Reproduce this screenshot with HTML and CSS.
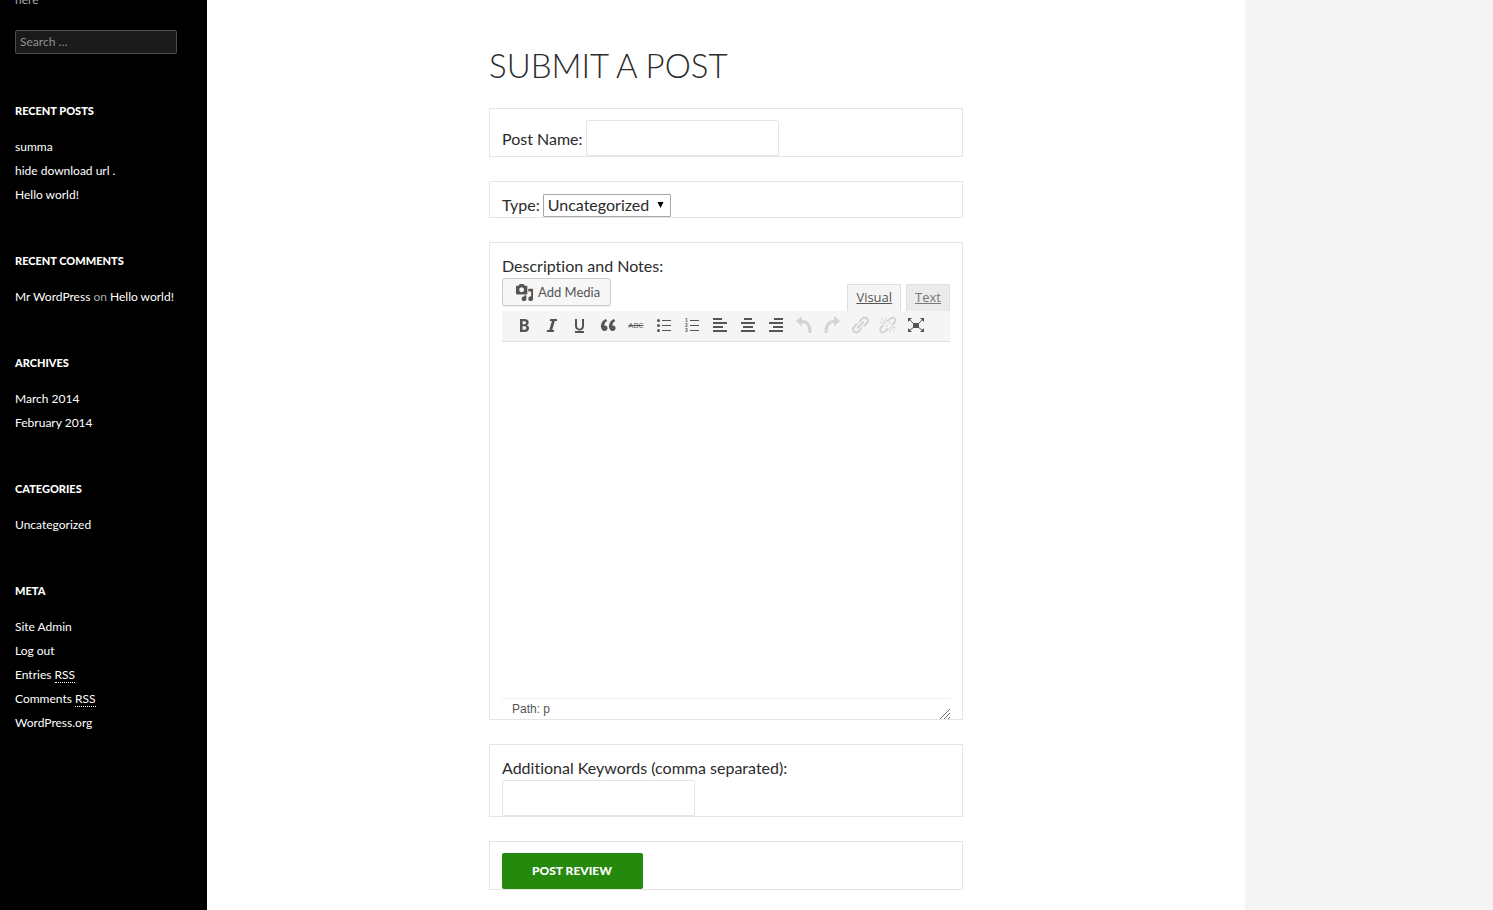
FILE: index.html
```html
<!DOCTYPE html>
<html lang="en">
<head>
<meta charset="utf-8">
<title>Submit a Post</title>
<link rel="stylesheet" href="styles.css">
</head>
<body>
<div class="site">
  <aside class="sidebar">
    <p class="tagline">here</p>
    <input class="search" type="search" placeholder="Search …" aria-label="Search">
    <section class="widget">
      <h2>Recent Posts</h2>
      <ul>
        <li><a href="#">summa</a></li>
        <li><a href="#">hide download url .</a></li>
        <li><a href="#">Hello world!</a></li>
      </ul>
    </section>
    <section class="widget">
      <h2>Recent Comments</h2>
      <ul>
        <li><a href="#">Mr WordPress</a> on <a href="#">Hello world!</a></li>
      </ul>
    </section>
    <section class="widget">
      <h2>Archives</h2>
      <ul>
        <li><a href="#">March 2014</a></li>
        <li><a href="#">February 2014</a></li>
      </ul>
    </section>
    <section class="widget">
      <h2>Categories</h2>
      <ul>
        <li><a href="#">Uncategorized</a></li>
      </ul>
    </section>
    <section class="widget">
      <h2>Meta</h2>
      <ul>
        <li><a href="#">Site Admin</a></li>
        <li><a href="#">Log out</a></li>
        <li><a href="#">Entries <abbr>RSS</abbr></a></li>
        <li><a href="#">Comments <abbr>RSS</abbr></a></li>
        <li><a href="#">WordPress.org</a></li>
      </ul>
    </section>
  </aside>

  <main class="content">
    <form class="post-form">
      <h1>Submit a Post</h1>

      <div class="field field-inline">
        <label for="post-name">Post Name:</label>
        <input class="text-input" id="post-name" type="text">
      </div>

      <div class="field field-inline">
        <label for="post-type">Type:</label>
        <span class="select-wrap">
          <select id="post-type"><option>Uncategorized</option></select>
          <svg class="select-arrow" viewBox="0 0 8 6" aria-hidden="true"><path d="M0.500 0h6L3.500 6z"/></svg>
        </span>
      </div>

      <div class="field">
        <label for="description">Description and Notes:</label>
        <div class="editor">
          <div class="editor-tools">
            <button class="media-button" type="button">
              <svg viewBox="0 0 20 20" aria-hidden="true"><path d="M13 11V4c0-.55-.45-1-1-1h-1.670L9 1H5L3.670 3H2c-.55 0-1 .45-1 1v7c0 .55.45 1 1 1h10c.55 0 1-.45 1-1zM7 4.500c1.380 0 2.500 1.120 2.500 2.500S8.380 9.500 7 9.500 4.500 8.380 4.500 7 5.620 4.500 7 4.500zM14 6h5v10.500c0 1.380-1.120 2.500-2.500 2.500S14 17.880 14 16.500s1.120-2.500 2.500-2.500c.17 0 .34.02.5.05V9h-3V6zm-4 8.050V13h2v3.500c0 1.380-1.120 2.500-2.500 2.500S7 17.880 7 16.500 8.120 14 9.500 14c.17 0 .34.02.5.05z"/></svg>
              Add Media
            </button>
            <div class="tabs">
              <a class="tab tab-active" href="#">Visual</a>
              <a class="tab" href="#">Text</a>
            </div>
          </div>
          <div class="toolbar">
            <button type="button" aria-label="Bold"><svg viewBox="0 0 20 20"><path d="M6 4v13h4.540c1.370 0 2.460-.33 3.260-1 .8-.66 1.200-1.580 1.200-2.770 0-.84-.17-1.510-.51-2.010s-.9-.85-1.670-1.030v-.09c.57-.1 1.020-.4 1.360-.9s.51-1.130.51-1.910c0-1.140-.39-1.980-1.170-2.500C12.750 4.260 11.500 4 9.780 4H6zm2.570 5.150V6.260h1.360c.73 0 1.270.11 1.610.32.34.22.51.58.51 1.070 0 .54-.16.92-.47 1.150s-.82.35-1.510.35h-1.500zm0 2.190h1.600c1.440 0 2.160.53 2.160 1.610 0 .6-.17 1.050-.51 1.340s-.86.43-1.570.43H8.570v-3.380z"/></svg></button>
            <button type="button" aria-label="Italic"><svg viewBox="0 0 20 20"><path d="M15 4v2h-2.200l-2.600 9h2.100l-.6 2H4.600l.6-2h2.100l2.600-9H7.700l.6-2z"/></svg></button>
            <button type="button" aria-label="Underline"><svg viewBox="0 0 20 20"><path d="M14 4h-2v6.710c0 1.990-1.120 2.980-2.450 2.980-1.320 0-2.550-1-2.550-2.960V4H5v6.870c0 1.910 1 4.540 4.480 4.540 3.490 0 4.520-2.580 4.520-4.500V4zm0 14v-2H5v2h9z"/></svg></button>
            <button type="button" aria-label="Blockquote"><svg viewBox="0 0 20 20"><path d="M9.490 13.220c0-.74-.2-1.380-.61-1.900-.62-.78-1.830-.88-2.530-.72-.29-1.650 1.110-3.750 2.920-4.650L7.880 4c-2.730 1.300-5.420 4.280-4.960 8.050C3.210 14.430 4.590 16 6.540 16c.85 0 1.560-.25 2.120-.75s.83-1.180.83-2.030zm8.050 0c0-.74-.2-1.380-.61-1.900-.63-.78-1.830-.88-2.530-.72-.29-1.650 1.110-3.750 2.920-4.650L15.930 4c-2.730 1.300-5.410 4.280-4.950 8.050.29 2.380 1.660 3.950 3.610 3.950.85 0 1.560-.25 2.120-.75s.83-1.180.83-2.030z"/></svg></button>
            <button class="strike" type="button" aria-label="Strikethrough">ABC</button>
            <button type="button" aria-label="Bulleted list"><svg viewBox="0 0 20 20"><circle cx="4.500" cy="5.500" r="1.500"/><circle cx="4.500" cy="10.500" r="1.500"/><circle cx="4.500" cy="15.500" r="1.500"/><path d="M8 5h9v1H8zM8 10h9v1H8zM8 15h9v1H8z"/></svg></button>
            <button type="button" aria-label="Numbered list"><svg viewBox="0 0 20 20"><text x="3" y="7">1</text><text x="3" y="12">2</text><text x="3" y="17">3</text><path d="M8 5h9v1H8zM8 10h9v1H8zM8 15h9v1H8z"/></svg></button>
            <button type="button" aria-label="Align left"><svg viewBox="0 0 20 20"><path d="M3 3h9v2H3zM3 7h14v2H3zM3 11h10v2H3zM3 15h14v2H3z"/></svg></button>
            <button type="button" aria-label="Align center"><svg viewBox="0 0 20 20"><path d="M6 3h8v2H6zM3 7h14v2H3zM5 11h10v2H5zM3 15h14v2H3z"/></svg></button>
            <button type="button" aria-label="Align right"><svg viewBox="0 0 20 20"><path d="M8 3h9v2H8zM3 7h14v2H3zM7 11h10v2H7zM3 15h14v2H3z"/></svg></button>
            <button type="button" aria-label="Undo" disabled><svg viewBox="0 0 20 20"><path d="M8 1v4c6 0 10 4.500 9.500 13h-3C14.500 11.500 12.500 8 8 8v3.500L2 6z"/></svg></button>
            <button type="button" aria-label="Redo" disabled><svg viewBox="0 0 20 20"><path d="M12 1v4C6 5 2 9.500 2.500 18h3C5.500 11.500 7.500 8 12 8v3.500L18 6z"/></svg></button>
            <button type="button" aria-label="Insert link" disabled><svg viewBox="0 0 20 20"><path d="M17.740 2.760c1.680 1.690 1.680 4.410 0 6.100l-1.530 1.520c-1.120 1.120-2.700 1.470-4.140 1.090l2.620-2.610.76-.77.76-.76c.84-.84.84-2.200 0-3.040-.84-.85-2.200-.85-3.040 0l-.77.76-3.380 3.380c-.37-1.440-.02-3.020 1.100-4.140l1.520-1.530c1.690-1.680 4.420-1.680 6.100 0zM8.590 13.430l5.340-5.340c.42-.42.42-1.100 0-1.520-.44-.43-1.130-.39-1.530 0l-5.330 5.340c-.42.42-.42 1.100 0 1.520.44.43 1.130.39 1.520 0zm-.76 2.290l4.140-4.150c.38 1.440.03 3.020-1.090 4.140l-1.520 1.530c-1.690 1.680-4.410 1.680-6.100 0-1.680-1.680-1.680-4.420 0-6.100l1.530-1.520c1.120-1.120 2.700-1.470 4.140-1.100l-4.140 4.150c-.85.84-.85 2.200 0 3.050.84.84 2.200.84 3.040 0z"/></svg></button>
            <button type="button" aria-label="Remove link" disabled><svg viewBox="0 0 20 20"><path class="line" d="M9.500 6.500l3-3c3-2.200 6.300 1 4.100 4L14 10M10 13.500l-3 3c-3 2.200-6.300-1-4.100-4L5.500 10"/><path class="thin" d="M3 3l5 5M7.500 2l1.500 5M2 7l5.500 2M12 12l5 5M11 13l1.500 5M12.500 11l5.500 2M8 12l2-2M11 9l2-2"/></svg></button>
            <button type="button" aria-label="Fullscreen"><svg viewBox="0 0 20 20"><path d="M7 8h6v5H7zM2 3h4L2 7zM18 3h-4l4 4zM2 17h4l-4-4zM18 17h-4l4-4z"/><path class="thin" d="M4 5l4 4M16 5l-4 4M4 15l4-3M16 15l-4-3"/></svg></button>
          </div>
          <textarea id="description"></textarea>
          <div class="status">
            <span>Path: p</span>
            <svg viewBox="0 0 11 11" aria-hidden="true"><path d="M1 11L11 1M5 11l6-6M9 11l2-2"/></svg>
          </div>
        </div>
      </div>

      <div class="field">
        <label for="keywords">Additional Keywords (comma separated):</label>
        <input class="text-input" id="keywords" type="text">
      </div>

      <div class="field">
        <button class="submit" type="submit">Post Review</button>
      </div>
    </form>
  </main>
</div>
</body>
</html>
```

FILE: styles.css
```css
* {
  box-sizing: border-box;
}

body {
  margin: 0;
  background: #f4f4f4;
  color: #2b2b2b;
  font: 16px/24px Lato, sans-serif;
  font-variant-ligatures: none;
  overflow: hidden;
}

h1, h2, p, ul {
  margin: 0;
  padding: 0;
}

input, select, button, textarea {
  font: inherit;
  color: inherit;
  margin: 0;
}

.site {
  display: flex;
  max-width: 1245px;
  min-height: 100vh;
  background: #fff;
}

/* Sidebar */

.sidebar {
  flex: 0 0 207px;
  padding: 0 30px 0 15px;
  background: #000;
  color: #aaa;
  font-size: 12px;
}

.tagline {
  margin: -12px 0 18px;
}

.search {
  display: block;
  width: 100%;
  height: 24px;
  margin-bottom: 45px;
  padding: 0 4px;
  border: 1px solid #4d4d4d;
  border-radius: 2px;
  background: #1a1a1a;
  color: #fff;
}

.search::placeholder {
  color: #919191;
}

.widget {
  margin-bottom: 42px;
}

.widget h2 {
  margin-bottom: 12px;
  color: #fff;
  font-size: 11px;
  font-weight: 900;
  line-height: 24px;
  text-transform: uppercase;
}

.widget ul {
  list-style: none;
}

.widget a {
  color: #fff;
  text-decoration: none;
}

.widget abbr {
  border-bottom: 1px dotted #fff;
}

/* Form */

.content {
  flex: 1;
  padding: 47px 24px 20px;
}

.post-form {
  max-width: 474px;
  margin: 0 auto;
}

h1 {
  margin-bottom: 25px;
  font-size: 33px;
  font-weight: 300;
  line-height: 36px;
  text-transform: uppercase;
}

.field {
  margin-bottom: 24px;
  padding: 11px 12px 0;
  border: 1px solid #e5e5e5;
}

.field label {
  display: block;
}

.field-inline {
  display: flex;
  align-items: baseline;
  gap: 3px;
}

.text-input {
  display: block;
  width: 193px;
  height: 36px;
  padding: 6px 10px;
  border: 1px solid #e5e5e5;
  border-radius: 2px;
  background: #fff;
}

.select-wrap {
  position: relative;
}

.select-wrap select {
  display: block;
  width: 128px;
  height: 23px;
  padding: 0 4px;
  border: 1px solid #a9a9a9;
  border-radius: 1px;
  background: #fff;
  line-height: 20px;
  appearance: none;
}

.select-arrow {
  position: absolute;
  top: 8px;
  right: 6px;
  width: 8px;
  height: 6px;
  pointer-events: none;
}

/* Editor */

.editor-tools {
  display: flex;
  justify-content: space-between;
  height: 33px;
}

.media-button {
  display: flex;
  align-items: center;
  gap: 4px;
  height: 28px;
  padding: 0 10px 0 12px;
  border: 1px solid #ccc;
  border-radius: 3px;
  background: #f7f7f7;
  box-shadow: 0 1px 0 rgba(0, 0, 0, 0.08);
  color: #555;
  font-size: 13px;
}

.media-button svg {
  width: 19px;
  height: 19px;
  fill: #555;
}

.tabs {
  display: flex;
  align-items: flex-end;
  gap: 5px;
}

.tab {
  height: 27px;
  padding: 0 8px;
  border: 1px solid #dedede;
  border-bottom: 0;
  background: #ebebeb;
  color: #777;
  font: 13px/24px "Open Sans", sans-serif;
}

.tab-active {
  background: #f5f5f5;
  color: #555;
}

.toolbar {
  display: flex;
  height: 31px;
  padding: 0 8px;
  border-bottom: 1px solid #dedede;
  background: #f5f5f5;
}

.toolbar button {
  flex: 0 1 28px;
  height: 28px;
  padding: 4px;
  border: 0;
  background: none;
}

.toolbar svg {
  display: block;
  width: 20px;
  height: 20px;
  fill: #555;
}

.toolbar text {
  font: 700 5px "Liberation Sans", Arial, sans-serif;
}

.toolbar .line,
.toolbar .thin {
  fill: none;
  stroke: #555;
  stroke-width: 2px;
}

.toolbar .thin {
  stroke-width: 1px;
}

.toolbar button:disabled {
  opacity: 0.2;
}

.toolbar .strike {
  padding: 0;
  color: #555;
  font: 8px/28px "Open Sans", sans-serif;
  text-decoration: line-through;
}

.editor textarea {
  display: block;
  width: 100%;
  height: 356px;
  padding: 10px;
  border: 0;
  background: #fff;
  resize: none;
}

.status {
  display: flex;
  justify-content: space-between;
  align-items: flex-end;
  height: 21px;
  padding-left: 10px;
  border-top: 1px solid #eee;
  color: #555;
  font: 12px/20px "Liberation Sans", Arial, sans-serif;
}

.status svg {
  width: 11px;
  height: 11px;
  fill: none;
  stroke: #666;
}

.submit {
  display: block;
  height: 36px;
  padding: 0 31px 0 30px;
  border: 0;
  border-radius: 2px;
  background: #24890d;
  color: #fff;
  font-size: 12px;
  font-weight: 900;
  text-transform: uppercase;
}
```
